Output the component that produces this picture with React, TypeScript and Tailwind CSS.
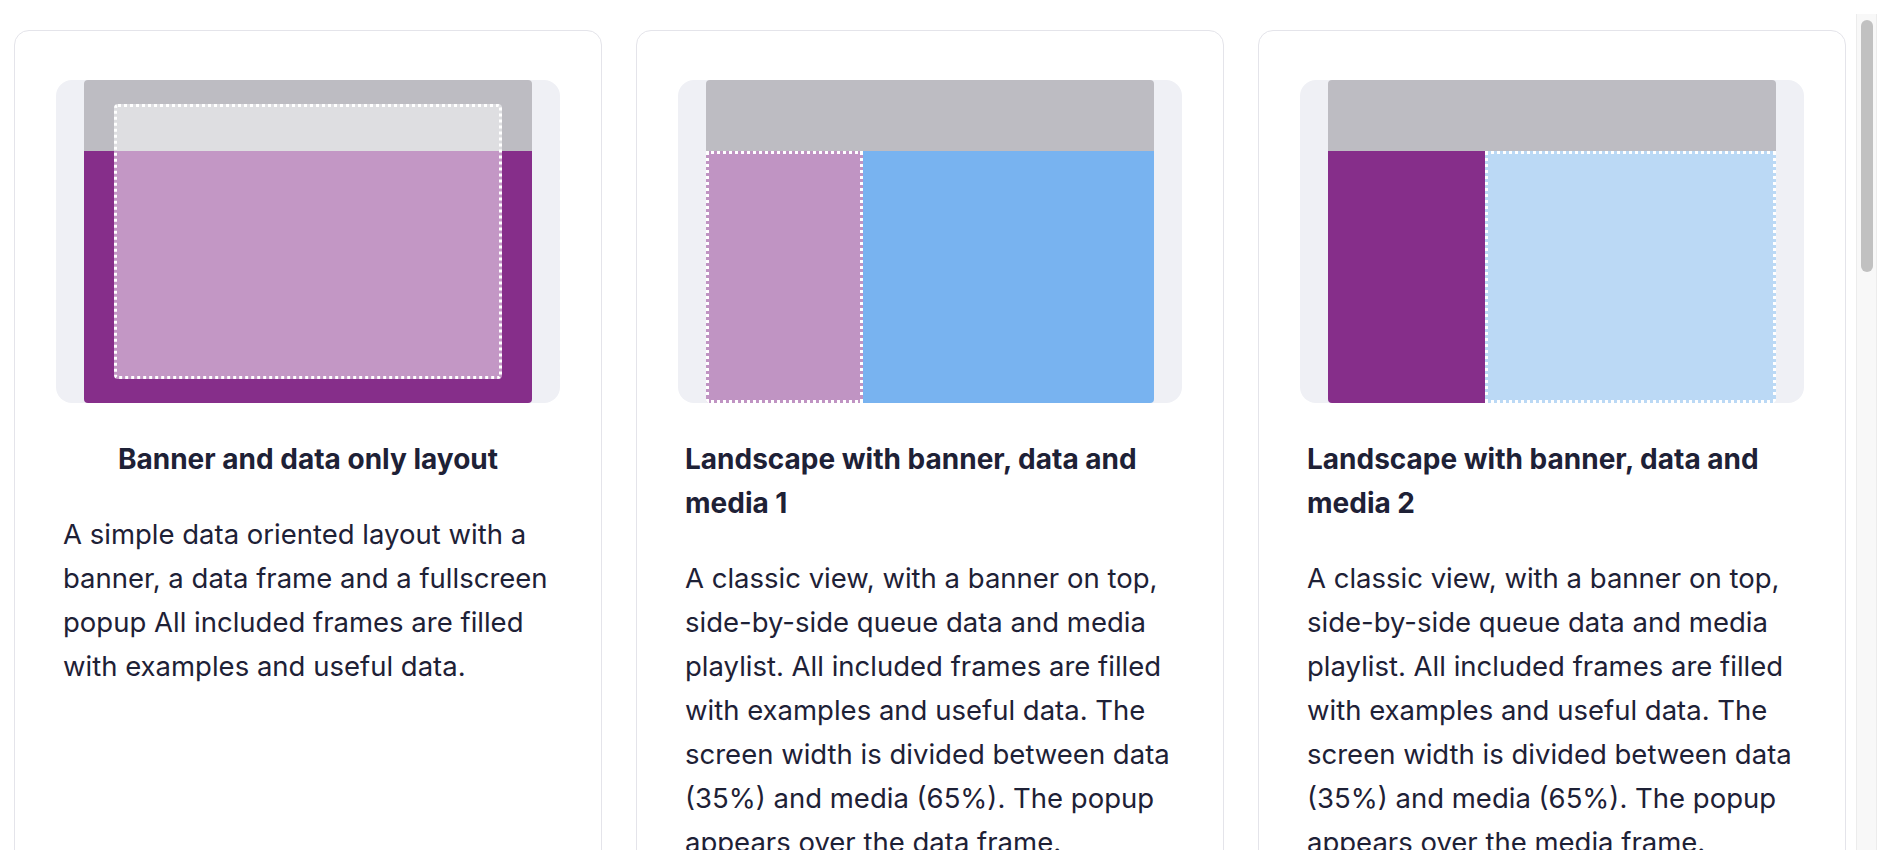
import React from "react";

type Card = {
  title: string;
  desc: string;
  kind: 1 | 2 | 3;
};

const cards: Card[] = [
  {
    title: "Banner and data only layout",
    desc: "A simple data oriented layout with a banner, a data frame and a fullscreen popup All included frames are filled with examples and useful data.",
    kind: 1,
  },
  {
    title: "Landscape with banner, data and media 1",
    desc: "A classic view, with a banner on top, side-by-side queue data and media playlist. All included frames are filled with examples and useful data. The screen width is divided between data (35%) and media (65%). The popup appears over the data frame.",
    kind: 2,
  },
  {
    title: "Landscape with banner, data and media 2",
    desc: "A classic view, with a banner on top, side-by-side queue data and media playlist. All included frames are filled with examples and useful data. The screen width is divided between data (35%) and media (65%). The popup appears over the media frame.",
    kind: 3,
  },
];

function Preview({ kind }: { kind: 1 | 2 | 3 }) {
  return (
    <div className="h-[323px] bg-[#eff0f5] rounded-[16px] px-[28px]">
      <div className="relative h-full rounded-[4px] overflow-hidden flex flex-col">
        <div className="h-[71px] bg-[#bdbcc2] shrink-0" />
        {kind === 1 && <div className="flex-1 bg-[#862e8a]" />}
        {kind === 2 && (
          <div className="flex-1 flex">
            <div className="w-[35%] bg-[#c094c3] border-[3px] border-dotted border-white" />
            <div className="flex-1 bg-[#78b3f0]" />
          </div>
        )}
        {kind === 3 && (
          <div className="flex-1 flex">
            <div className="w-[35%] bg-[#862e8a]" />
            <div className="flex-1 bg-[#bbd9f5] border-[3px] border-dotted border-white" />
          </div>
        )}
        {kind === 1 && (
          <div className="absolute top-[24px] bottom-[24px] left-[30px] right-[30px] rounded-[4px] bg-white/50 border-[3px] border-dotted border-white" />
        )}
      </div>
    </div>
  );
}

export default function App() {
  return (
    <div
      className="w-[1892px] h-[850px] overflow-hidden bg-white flex pt-[14px] pr-[15px] text-[#1e2136]"
      style={{ fontFamily: "Inter, 'Noto Sans', sans-serif" }}
    >
      <div className="flex-1 overflow-hidden pl-[14px] pr-[10px] pt-[16px]">
        <div className="grid grid-cols-3 gap-[34px] items-start">
          {cards.map((c) => (
            <div
              key={c.kind}
              className="border border-[#e4e4ea] rounded-[15px] pt-[49px] px-[41px] h-[900px]"
            >
              <Preview kind={c.kind} />
              <div className="px-[7px]">
                <div className="flex justify-center mt-[34px]">
                  <h3 className="text-[28px] leading-[44px] font-bold">{c.title}</h3>
                </div>
                <p className="mt-[31px] text-[27.5px] leading-[44px] font-normal">{c.desc}</p>
              </div>
            </div>
          ))}
        </div>
      </div>
      <div className="w-[21px] shrink-0 bg-[#f8f8f8] border-l border-r border-[#ececec] flex justify-center">
        <div className="mt-[6px] w-[12px] h-[252px] rounded-full bg-[#c1c1c1]" />
      </div>
    </div>
  );
}
